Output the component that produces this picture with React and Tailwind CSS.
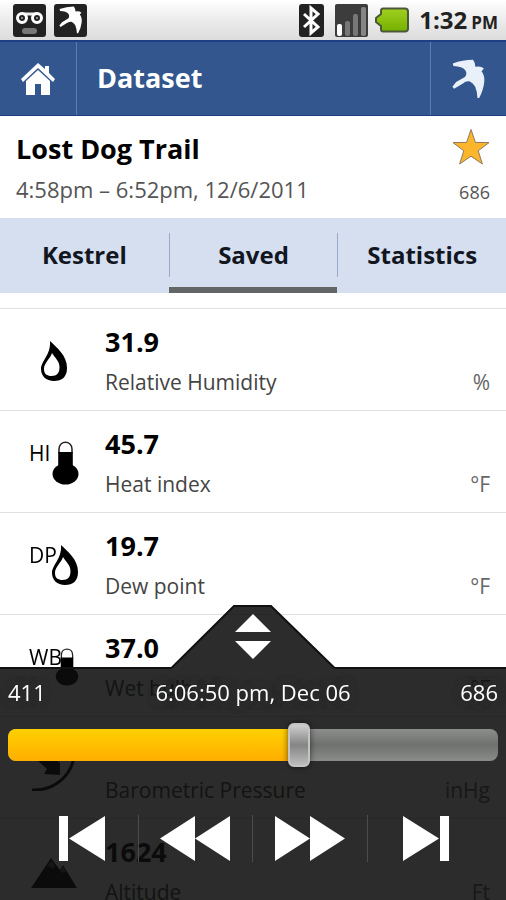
import { useState } from "react";

const TOTAL = 686;

const readings = [
  { value: "31.9", label: "Relative Humidity", unit: "%", icon: "drop" },
  { value: "45.7", label: "Heat index", unit: "°F", icon: "thermo", tag: "HI" },
  { value: "19.7", label: "Dew point", unit: "°F", icon: "drop", tag: "DP" },
  { value: "37.0", label: "Wet bulb", unit: "°F", icon: "thermoSmall", tag: "WB" },
  { value: "", label: "Barometric Pressure", unit: "inHg", icon: "gauge" },
  { value: "1624", label: "Altitude", unit: "Ft", icon: "mountain" },
];

const tabs = ["Kestrel", "Saved", "Statistics"];

export default function App() {
  const [tab, setTab] = useState("Saved");
  const [position, setPosition] = useState(411);

  const move = (step) => setPosition((prev) => Math.min(TOTAL, Math.max(0, prev + step)));

  return (
    <div className="flex h-screen flex-col overflow-hidden bg-white font-['Open_Sans','Noto_Sans',sans-serif] text-black">
      <StatusBar />

      <header className="flex h-[76px] shrink-0 items-stretch border-t-2 border-b border-[#1c3f86] bg-[#32568d] text-white">
        <button aria-label="Home" className="flex w-[77px] items-center justify-center border-r border-[#5d7cb0]">
          <HomeIcon />
        </button>
        <h1 className="flex flex-1 items-center pl-5 text-[27px] font-bold">Dataset</h1>
        <button aria-label="Kestrel" className="flex w-[76px] items-center justify-center border-l border-[#5d7cb0] text-[#e8f0fa]">
          <Bird className="h-10 w-[34px]" />
        </button>
      </header>

      <section className="flex h-[102px] shrink-0 items-stretch justify-between pr-4 pl-4">
        <div className="flex flex-col pt-[15px]">
          <h2 className="text-[27px] leading-9 font-bold">Lost Dog Trail</h2>
          <p className="mt-1 text-[22px] leading-9 text-[#555]">4:58pm – 6:52pm, 12/6/2011</p>
        </div>
        <div className="flex flex-col items-end pt-3">
          <svg viewBox="0 0 38 38" className="h-[38px] w-[38px]" aria-hidden="true">
            <path d="M19 1.5 23.4 14.4 37 14.6 26.2 22.8 30.4 36 19 28.2 7.6 36 11.8 22.8 1 14.6 14.6 14.4Z" fill="#fbb62b" stroke="#8c7a5c" strokeWidth="1" />
          </svg>
          <span className="mt-2 text-lg leading-9 text-[#555]">686</span>
        </div>
      </section>

      <nav className="grid h-[75px] shrink-0 grid-cols-3 bg-[#d5dff0]">
        {tabs.map((name, i) => (
          <button
            key={name}
            onClick={() => setTab(name)}
            className={`flex flex-col border-b-[6px] pt-[15px] ${tab === name ? "border-[#626667]" : "border-transparent"}`}
          >
            <span className={`flex h-11 w-full items-center justify-center text-2xl font-bold text-[#12161f] ${i > 0 ? "border-l border-[#9aa9c6]" : ""}`}>
              {name}
            </span>
          </button>
        ))}
      </nav>

      <main className="min-h-0 flex-1 overflow-hidden pt-[15px]">
        {readings.map((row) => (
          <Reading key={row.label} {...row} />
        ))}
      </main>

      <footer className="fixed inset-x-0 bottom-0 text-white">
        <div className="flex items-end">
          <div className="flex-1 border-b-2 border-[#111]" />
          <button aria-label="Expand or collapse" className="block">
            <svg viewBox="0 0 164 64" className="block h-16 w-[164px]">
              <path d="M0 64 63 1H100L164 64Z" fill="rgb(12 13 12 / 0.87)" />
              <path d="M0 63.5 63 1H100L164 63.5" fill="none" stroke="#111" strokeWidth="2" />
              <path d="M82 9 100 27H64ZM64 36H100L82 54Z" fill="#fff" />
            </svg>
          </button>
          <div className="flex-1 border-b-2 border-[#111]" />
        </div>

        <div className="h-[231px] bg-[#0c0d0c]/87 px-2 pt-[3px]">
          <div className="flex justify-between text-[22px] leading-10 text-shadow-[0_0_4px_#292a29,0_0_8px_#292a29,0_0_8px_#292a29]">
            <span>{position}</span>
            <span>6:06:50 pm, Dec 06</span>
            <span>{TOTAL}</span>
          </div>

          <div className="relative mt-[17px] h-8 rounded-lg bg-linear-to-b from-[#8c8e8c] via-[#6f716f] to-[#8a8c8a]">
            <div
              className="h-full rounded-l-lg bg-linear-to-b from-[#ffd000] to-[#ffae00]"
              style={{ width: `${(position / TOTAL) * 100}%` }}
            />
            <input
              type="range"
              min="0"
              max={TOTAL}
              value={position}
              aria-label="Position"
              onChange={(e) => setPosition(Number(e.target.value))}
              className="absolute inset-0 m-0 h-8 w-full appearance-none bg-transparent [&::-webkit-slider-thumb]:h-11 [&::-webkit-slider-thumb]:w-[22px] [&::-webkit-slider-thumb]:appearance-none [&::-webkit-slider-thumb]:rounded-md [&::-webkit-slider-thumb]:border-2 [&::-webkit-slider-thumb]:border-[#c4c4c4] [&::-webkit-slider-thumb]:bg-linear-to-b [&::-webkit-slider-thumb]:from-[#cfcfcf] [&::-webkit-slider-thumb]:via-[#858585] [&::-webkit-slider-thumb]:to-[#bdbdbd] [&::-webkit-slider-thumb]:shadow-[0_0_6px_#0009]"
            />
          </div>

          <div className="mt-[54px] grid grid-cols-4 divide-x divide-[#4b4d4b] px-4">
            <Control label="First" onClick={() => setPosition(0)}>
              <path d="M14 1H23V46H14ZM24 23.5 60 1V46Z" />
            </Control>
            <Control label="Back" onClick={() => move(-1)}>
              <path d="M1 23.5 36 1V46ZM36 23.5 71 1V46Z" />
            </Control>
            <Control label="Forward" onClick={() => move(1)}>
              <path d="M1 1 36 23.5 1 46ZM36 1 71 23.5 36 46Z" />
            </Control>
            <Control label="Last" onClick={() => setPosition(TOTAL)}>
              <path d="M14 1 50 23.5 14 46ZM51 1H60V46H51Z" />
            </Control>
          </div>
        </div>
      </footer>
    </div>
  );
}

function StatusBar() {
  return (
    <div className="flex h-10 shrink-0 items-center justify-between bg-linear-to-b from-white via-[#ececec] to-[#dcdcdc] pr-2 pl-[13px]">
      <div className="flex gap-2">
        <svg viewBox="0 0 33 33" className="h-[33px] w-[33px]" aria-hidden="true">
          <rect width="33" height="33" rx="3" fill="#222" />
          <path d="M9 10H24" stroke="#eee" strokeWidth="3" />
          <circle cx="9" cy="14" r="4.5" fill="#222" stroke="#fff" strokeWidth="3" />
          <circle cx="24" cy="14" r="4.5" fill="#222" stroke="#fff" strokeWidth="3" />
          <circle cx="9" cy="14" r="1" fill="#aaa" />
          <circle cx="24" cy="14" r="1" fill="#aaa" />
          <rect x="9" y="24" width="15" height="6" rx="3" fill="#777" />
        </svg>
        <span className="flex h-[33px] w-[33px] items-center justify-center rounded-[3px] bg-[#222] text-white">
          <Bird className="h-7 w-6" />
        </span>
      </div>
      <div className="flex items-center">
        <svg viewBox="0 0 25 33" className="h-[33px] w-[25px]" aria-hidden="true">
          <rect width="25" height="33" rx="3" fill="#222" />
          <path d="M5 10 19 23 12 29V4L19 10 5 23" fill="none" stroke="#fff" strokeWidth="3" />
        </svg>
        <svg viewBox="0 0 33 33" className="ml-[11px] h-[33px] w-[33px]" aria-hidden="true">
          <rect width="33" height="33" rx="2" fill="#3c3c3c" />
          <rect x="2" y="20" width="5" height="12" rx="2" fill="#fff" />
          <rect x="10" y="17" width="5" height="15" rx="2" fill="#777" />
          <rect x="18" y="10" width="5" height="22" rx="2" fill="#777" />
          <rect x="26" y="3" width="5" height="29" rx="2" fill="#858585" />
        </svg>
        <svg viewBox="0 0 34 26" className="ml-[7px] h-[26px] w-[34px]" aria-hidden="true">
          <defs>
            <linearGradient id="battery" x1="0" y1="0" x2="0" y2="1">
              <stop offset="0" stopColor="#a0d020" />
              <stop offset="1" stopColor="#75b000" />
            </linearGradient>
          </defs>
          <path d="M8 1.5H30Q33 1.5 33 4.5V21.5Q33 24.5 30 24.5H8Q6 24.5 6 22V19L1 15V11L6 7V4Q6 1.5 8 1.5Z" fill="url(#battery)" stroke="#4a5a38" strokeWidth="2" />
        </svg>
        <span className="ml-[10px] flex items-baseline gap-1 text-2xl font-bold text-[#222]">
          1:32 <span className="text-[17px]">PM</span>
        </span>
      </div>
    </div>
  );
}

function Reading({ value, label, unit, icon, tag }) {
  return (
    <div className="flex h-[102px] border-t border-[#e0e0e0] pr-4">
      <div className="grid w-[105px] shrink-0 grid-cols-[50px] content-start pt-[30px] pl-[29px]">
        {tag && <span className="z-10 col-start-1 row-start-1 h-0 text-[21px] leading-6">{tag}</span>}
        <div className={`col-start-1 row-start-1 flex h-11 items-center ${tag ? "justify-end" : "justify-center"}`}>
          <ReadingIcon name={icon} />
        </div>
      </div>
      <div className="flex flex-1 flex-col pt-[15px]">
        <div className="h-9 text-[27px] leading-9 font-bold">{value}</div>
        <div className="mt-1 flex justify-between text-[21px] leading-9 text-[#444]">
          <span>{label}</span>
          <span className="text-[#666]">{unit}</span>
        </div>
      </div>
    </div>
  );
}

function ReadingIcon({ name }) {
  if (name === "drop") {
    return (
      <svg viewBox="0 0 27 41" className="h-[41px] w-[27px]" aria-hidden="true">
        <path fillRule="evenodd" d="M9 0C15 6 26 14 26 27C26 36 21 40 13 40C5 40 0 35 0 28C0 20 10 14 9 0ZM11 12C9 18 3 22 3 28C3 33 6 35 10.5 35C16 35 18.500 32 18.500 26C18.500 20 14 17 11 12Z" />
      </svg>
    );
  }
  if (name === "thermo" || name === "thermoSmall") {
    return (
      <svg viewBox="0 0 27 44" className={name === "thermo" ? "h-11 w-[27px]" : "h-[38px] w-6"} aria-hidden="true">
        <path d="M7 12V8C7 -1 20 -1 20 8V12" fill="#fff" stroke="#222" strokeWidth="1.5" />
        <path d="M6.2 11H20.8V25H6.2Z" />
        <ellipse cx="13.5" cy="33" rx="13" ry="10.5" />
      </svg>
    );
  }
  if (name === "gauge") {
    return (
      <svg viewBox="0 0 50 44" className="h-11 w-[50px]" aria-hidden="true">
        <path d="M3 43C24 44 44 30 46 4" fill="none" stroke="#000" strokeWidth="3" />
        <path d="M8 4 20 14 25 9 31 16V28L15 27 18 22 8 13Z" />
      </svg>
    );
  }
  return (
    <svg viewBox="0 0 48 32" className="mt-1 h-8 w-12" aria-hidden="true">
      <path d="M1 31 21 1 30 13 33 8 47 31Z" />
      <path d="M17 10 21 3 25 9 22 12 20 9Z" fill="#555" />
      <path d="M30 14 33 9 36 14 33 16Z" fill="#555" />
    </svg>
  );
}

function Control({ label, onClick, children }) {
  return (
    <button aria-label={label} onClick={onClick} className="flex justify-center">
      <svg viewBox="0 0 72 47" className="h-[47px] w-[72px] fill-white">
        {children}
      </svg>
    </button>
  );
}

function Bird({ className }) {
  return (
    <svg viewBox="24 24 100 118" className={className} fill="currentColor" aria-hidden="true">
      <path d="M26 37Q55 26 86 26Q93 36 93 47Q108 43 118 52L111 60Q121 72 119 92Q116 118 104 139H99Q99 122 92 105Q85 94 75 90Q64 89 55 97L30 112L25 106L36 92L62 77Q70 68 63 57Q55 46 28 45Z" />
    </svg>
  );
}

function HomeIcon() {
  return (
    <svg viewBox="0 0 36 34" className="h-[34px] w-9" aria-hidden="true">
      <path d="M18 1 25 7V4H29V11L35 17 33 20 18 6 3 20 1 17Z" fill="#fff" />
      <path d="M18 8 30 19V33H21V22H15V33H6V19Z" fill="#fff" />
    </svg>
  );
}
